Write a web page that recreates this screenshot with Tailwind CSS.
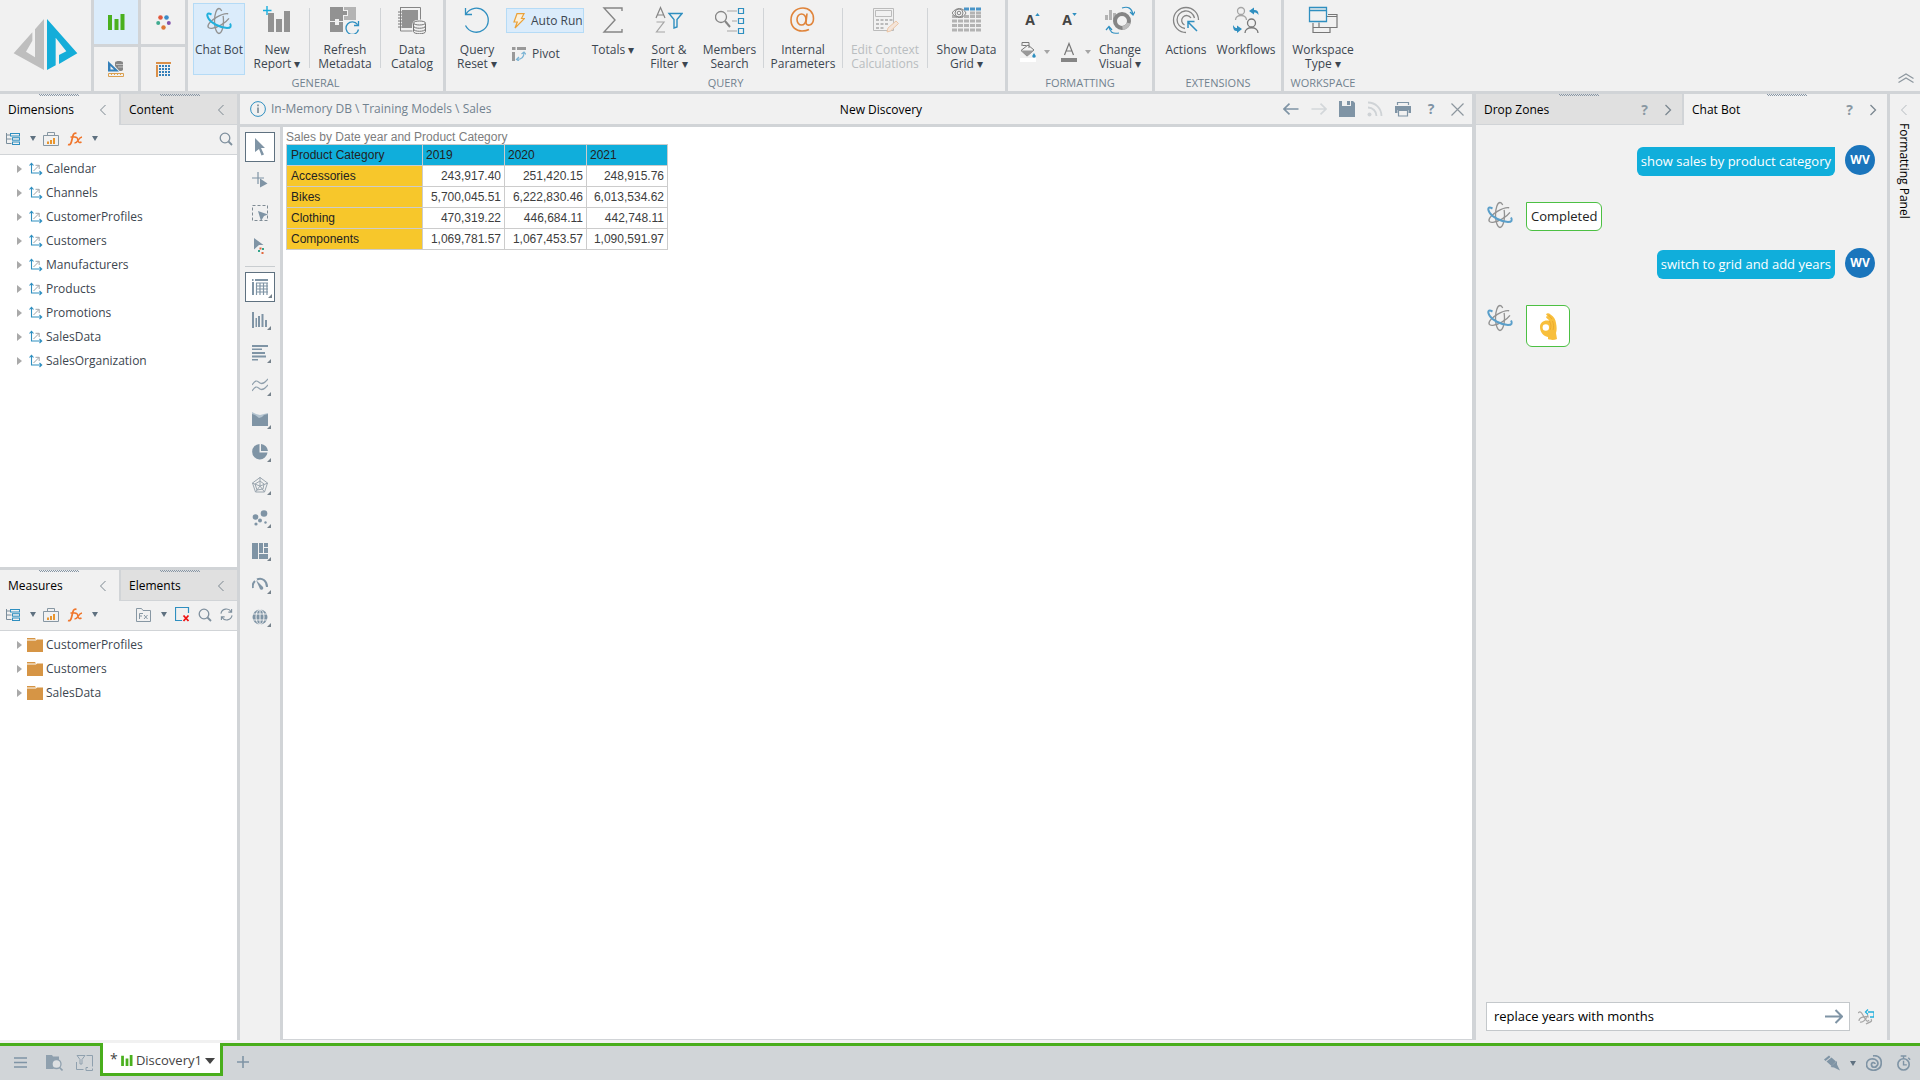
<!DOCTYPE html>
<html lang="en">
<head>
<meta charset="utf-8">
<title>New Discovery</title>
<script src="https://cdn.jsdelivr.net/npm/@tailwindcss/browser@4"></script>
</head>
<body class="flex h-screen flex-col overflow-hidden bg-[#f1f1f1] font-['Open_Sans','Noto_Sans',sans-serif] text-xs text-[#3c4650]">

<!-- Shared icon shapes -->
<svg class="hidden">
  <symbol id="atom" viewBox="0 0 28 28"><g fill="none" stroke-width="1.3"><ellipse cx="14" cy="14" rx="4.5" ry="12.5" stroke="#929292" stroke-dasharray="46 5"/><ellipse cx="14" cy="14" rx="4.5" ry="12.5" stroke="#929292" transform="rotate(60 14 14)" stroke-dasharray="40 6"/><path d="M3.500 11.500C1 7 2.500 5.500 6.500 7.500M3.500 11.500c2.500 4.500 11 9 18.500 9.500 4 0 4.500-2 3-4.500" stroke="currentColor" stroke-width="2"/></g></symbol>
  <symbol id="chev-l" viewBox="0 0 8 12"><path d="M6.500 1L1.500 6l5 5" fill="none" stroke="#7b8790"/></symbol>
  <symbol id="chev-r" viewBox="0 0 8 12"><path d="M1.500 1l5 5-5 5" fill="none" stroke="#7b8790" stroke-width="1.300"/></symbol>
  <symbol id="axes" viewBox="0 0 14 14"><path d="M2.500 1.500v9.500h10M.5 3.500l2-2.200 2 2.200M10.500 9l2.200 2-2.200 2" fill="none" stroke="#2f8fc0" stroke-width="1.100"/><path d="M4.500 9L10 3.500M6.500 3.300h3.700V7" fill="none" stroke="#a0a4a8"/></symbol>
  <symbol id="folder" viewBox="0 0 16 14"><path d="M0 0h8l1 1.500H0zM0 2.500h9l1-1h6V14H0z" fill="#d69545"/></symbol>
  <symbol id="tri" viewBox="0 0 6 8"><path d="M0 0l5 4-5 4z" fill="#a9a9a9"/></symbol>
  <symbol id="down" viewBox="0 0 6 5"><path d="M0 0h6L3 5z" fill="#5f7180"/></symbol>
  <symbol id="tree" viewBox="0 0 14 12"><path d="M.5 0v10.500h5M.5 2h3.500M.5 6h5" fill="none" stroke="#7a8d9b"/><g fill="none" stroke="#2f8fc0"><rect x="4.500" y="0.500" width="9" height="2.500"/><rect x="6.500" y="4.700" width="7" height="2.500"/><rect x="6.500" y="9" width="7" height="2.500"/></g></symbol>
  <symbol id="case" viewBox="0 0 16 14"><path d="M.5 3.500h15v10H.5zM4.500 3V.5h7V3" fill="none" stroke="#8797a3"/><path d="M4 9.500h2V12H4zM7 8h2v4H7zM10 6h2v6h-2z" fill="#e8952e"/></symbol>
  <symbol id="fx" viewBox="0 0 16 14"><path d="M1 12.500c2 .8 3-.8 3.500-3L6 3.500C6.500 1.500 8 .8 9.500 1.500M3.500 5h5" fill="none" stroke="#f0762c" stroke-width="1.700"/><path d="M8 5.500c2-1 2.500 1 3 3s1.500 2.500 3.500 1.500M15 5c-2 .3-3 2-4 3.500S9 11 7.500 11" fill="none" stroke="#f0762c" stroke-width="1.500"/></symbol>
  <symbol id="search" viewBox="0 0 14 14"><circle cx="6" cy="6" r="4.800" fill="none" stroke="#7f909e" stroke-width="1.300"/><path d="M9.500 9.500l3.500 3.500" stroke="#7f909e" stroke-width="1.800"/></symbol>
  <symbol id="grip" viewBox="0 0 40 2"><path d="M0 .5h40M1 1.500h40" stroke="#8796a5" stroke-dasharray="1 1"/></symbol>
  <symbol id="corner" viewBox="0 0 4 4"><path d="M4 0v4H0z" fill="#76828c"/></symbol>
  <symbol id="bars" viewBox="0 0 17 16"><path d="M0 1h4v15H0zM6.500 5h4v11h-4zM12.500 0h4v16h-4z" fill="#4ab01e"/></symbol>
  <symbol id="cursor" viewBox="0 0 12 18"><path d="M1 0l10 10H7l3 6.500-2.500 1L5 11l-4 3z" fill="#7f94a5"/></symbol>
</svg>

<header class="flex h-[94px] shrink-0 border-b-[3px] border-[#d1d4d7] leading-[14px]">
  <a href="#" aria-label="Home" class="w-[91px] shrink-0"><svg class="size-[91px]" viewBox="0 0 273 273"><path d="M132 57v153L41 160 97 97v25l-19 33 27 17V88z" fill="#bebebe"/><path d="M141 57l91 103-55 32v-27l22-11-32-41v83l-26 14z" fill="#14add9"/></svg></a>
  <nav aria-label="Modules" class="grid w-[97px] shrink-0 grid-cols-2 grid-rows-2 gap-[3px] border-x-[3px] border-[#d1d4d7] bg-[#d1d4d7]">
    <button aria-label="Discover" class="grid place-items-center bg-[#dbecfb]"><svg class="h-4 w-[17px]"><use href="#bars"/></svg></button>
    <button aria-label="Present" class="grid place-items-center bg-[#f1f1f1]"><svg class="size-[15px]" viewBox="0 0 15 15"><circle cx="4.500" cy="2.500" r="2.300" fill="#e2573c"/><circle cx="10.500" cy="2.500" r="2.300" fill="#3b8cc8"/><circle cx="2.200" cy="8" r="2" fill="#40ab90"/><circle cx="12.800" cy="8" r="2" fill="#8353ab"/><circle cx="7.500" cy="12.500" r="2.200" fill="#dd7733"/></svg></button>
    <button aria-label="Formulate" class="grid place-items-center bg-[#f1f1f1]"><svg class="size-4" viewBox="0 0 16 16"><path d="M0 0l11 10.500H0zM2.500 5v3.500H6z" fill="#3480ba" fill-rule="evenodd"/><path d="M7 1.500c0-2 8-2 8 0v7c0 1.500-3 2-4 1L7 5z" fill="#858585"/><path d="M8 3.500h7M10 6h5" stroke="#ddd" stroke-width=".7"/><path d="M.5 12.500h15v3H.5zM3.500 12.500V14M6.500 12.500V14M9.500 12.500V14M12.500 12.500V14" fill="none" stroke="#dba050"/></svg></button>
    <button aria-label="Model" class="grid place-items-center bg-[#f1f1f1]"><svg class="size-[15px]" viewBox="0 0 15 15"><path d="M0 1h15M1 3v12" stroke="#da9048" stroke-width="2"/><path d="M4 3v12M7 3v12M10 3v12M13 3v12" stroke="#3480ba" stroke-width="2" stroke-dasharray="2 1"/></svg></button>
  </nav>

  <section aria-label="General" class="flex w-[258px] shrink-0 flex-col border-r-[3px] border-[#d1d4d7]">
    <div class="flex h-[75px] pt-[3px] pl-[5px]">
      <button class="flex h-[72px] w-[52px] flex-col items-center border border-[#b5dbf6] bg-[#dbecfb] pt-[3px]"><svg class="size-7 text-[#22b0dc]"><use href="#atom"/></svg><span class="mt-2">Chat Bot</span></button>
      <button class="flex w-16 flex-col items-center pt-[3px]"><svg class="mb-[9px] size-7" viewBox="0 0 28 28"><path d="M4 0v9M-.5 4.500h9" stroke="#19aede" stroke-width="1.400"/><path d="M5 7h6v19H5zM13 13h6v13h-6zM21 5h6v21h-6z" fill="#929292"/></svg>New<br>Report ▾</button>
      <i class="mt-[5px] h-[60px] w-px bg-[#d1d4d7]"></i>
      <button class="flex w-[70px] flex-col items-center pt-[3px]"><svg class="mb-[9px] h-7 w-[30px]" viewBox="0 0 30 28"><path d="M0 1h13v4h4v4h-4v6H9v-2H5v2H0zM0 16h5v3h4v-3h4v10H0z" fill="#929292"/><path d="M14 1h12v13H14v-4h4V4h-4z" fill="#b4b4b4"/><path d="M27.500 18.500a6.300 6.300 0 1 0 1 5M28.500 15v4.500H24" fill="none" stroke="#2f8fc0" stroke-width="1.300"/></svg>Refresh<br>Metadata</button>
      <i class="mt-[5px] h-[60px] w-px bg-[#d1d4d7]"></i>
      <button class="flex w-[62px] flex-col items-center pt-[3px]"><svg class="mb-[9px] h-7 w-[30px]" viewBox="0 0 30 28"><path d="M3.500 1.500h20v12M3.500 1v24h12" fill="none" stroke="#858585"/><path d="M5 4h16v10c-4 0-6 1-6 8H5z" fill="#929292"/><path d="M1 6h4M1 9h4M1 12h4M1 15h4M1 18h4M1 21h4" stroke="#777"/><g fill="#f1f1f1" stroke="#777"><path d="M16.500 17.500v8c0 3 12 3 12 0v-8"/><path d="M16.500 20c0 3 12 3 12 0M16.500 23c0 3 12 3 12 0" fill="none"/><ellipse cx="22.500" cy="17" rx="6" ry="2"/></g></svg>Data<br>Catalog</button>
    </div>
    <h2 class="pt-px text-center text-[11px] text-[#71828f]">GENERAL</h2>
  </section>

  <section aria-label="Query" class="flex w-[562px] shrink-0 flex-col border-r-[3px] border-[#d1d4d7]">
    <div class="flex h-[75px] pt-[3px] pl-0.5">
      <button class="flex w-[58px] flex-col items-center pt-[3px]"><svg class="mb-[9px] size-7" viewBox="0 0 28 28"><path d="M3 8a12 12 0 1 1-.5 11.500M2.500 2v6.500H9" fill="none" stroke="#2f8fc0" stroke-width="1.300"/></svg>Query<br>Reset ▾</button>
      <div class="flex w-[78px] flex-col gap-2 pt-[5px]">
        <button class="flex h-[25px] items-center gap-1.5 border border-[#b5dbf6] bg-[#dbecfb] pl-1.5 whitespace-nowrap"><svg class="h-4 w-3 shrink-0" viewBox="0 0 12 16"><path d="M4 .7h7L8.500 5.500h3L2 15l2.300-6H1z" fill="#fdf0d8" stroke="#eaa23a" stroke-width="1.200"/></svg>Auto Run</button>
        <button class="flex h-[25px] items-center gap-1.5 pl-1.5"><svg class="size-[14px]" viewBox="0 0 14 14"><path d="M0 0h3.500v3H0zM5 0h9v3H5zM0 5h3v9H0z" fill="#999"/><path d="M5 12.500c5 0 7-2 7-7M9.500 7L12 5l2 2.500M7 10l-2.500 2.500L7 14" fill="none" stroke="#7ab3d4" stroke-width="1.200"/></svg>Pivot</button>
      </div>
      <button class="flex w-[58px] flex-col items-center pt-[3px]"><svg class="mb-[9px] size-7" viewBox="0 0 28 28"><path d="M23 5V2H5l11 12L5 26h18v-3" fill="none" stroke="#858585" stroke-width="1.400"/></svg>Totals ▾</button>
      <button class="flex w-[54px] flex-col items-center pt-[3px]"><svg class="mb-[9px] size-7" viewBox="0 0 28 28"><path d="M1 12L5.500 1.500 10 12M2.500 9h6" fill="none" stroke="#858585" stroke-width="1.200"/><path d="M1.500 16H9L1.500 26H10" fill="none" stroke="#a5a5a5" stroke-width="1.200"/><path d="M14 7.500h13l-5 6v7.500l-3 1v-8.500z" fill="none" stroke="#2f8fc0" stroke-width="1.400"/></svg>Sort &amp;<br>Filter ▾</button>
      <button class="flex w-[67px] flex-col items-center pt-[3px]"><svg class="mb-[9px] h-7 w-[30px]" viewBox="0 0 30 28"><circle cx="6" cy="11" r="5.500" fill="none" stroke="#858585" stroke-width="1.300"/><path d="M10 15l5 6" stroke="#858585" stroke-width="2"/><path d="M12 5h10M17 15h5M12 25h10" stroke="#a5a5a5"/><path d="M23.500 2.500h5v5h-5zM23.500 12.500h5v5h-5zM23.500 22.500h5v5h-5z" fill="none" stroke="#2f8fc0" stroke-width="1.200"/></svg>Members<br>Search</button>
      <i class="mt-[5px] h-[60px] w-px bg-[#d1d4d7]"></i>
      <button class="flex w-[78px] flex-col items-center pt-[3px]"><svg class="mb-[9px] size-7" viewBox="0 0 28 28"><g fill="none" stroke="#e0843a" stroke-width="1.600"><ellipse cx="12.500" cy="13.500" rx="4.500" ry="5.500"/><path d="M18 7.500l-1 9c-.3 4 7.500 4 7.500-4C24.500 6 20 2 14 2 7 2 2 7 2 14s5 11 11 11c3 0 5-.5 7-1.500"/></g></svg>Internal<br>Parameters</button>
      <i class="mt-[5px] h-[60px] w-px bg-[#d1d4d7]"></i>
      <button disabled class="flex w-[84px] flex-col items-center pt-[3px] text-[#b9bdc0]"><svg class="mb-[9px] h-7 w-[30px]" viewBox="0 0 30 28"><path d="M3.500 2.500h20v22h-20zM5.500 4.500h16v6h-16z" fill="none" stroke="#bbb"/><path d="M6 14h3m1.500 0h3m1.500 0h3m1.500 0h3M6 18h3m1.500 0h3m1.500 0h3M6 22h3m1.500 0h3" stroke="#bbb" stroke-width="2"/><path d="M17 26l1-4 8-7 2.500 2.500-8 7.500z" fill="#f4e5da" stroke="#ecc6a6"/></svg>Edit Context<br>Calculations</button>
      <i class="mt-[5px] h-[60px] w-px bg-[#d1d4d7]"></i>
      <button class="flex w-[77px] flex-col items-center pt-[3px]"><svg class="mb-[9px] h-7 w-[30px]" viewBox="0 0 30 28"><path d="M0 10.500h30M0 15h30M0 19.500h30M0 24h30" stroke="#b3b3b3" stroke-width="3" stroke-dasharray="5 1"/><path d="M12 3h18" stroke="#4a95c8" stroke-width="3" stroke-dasharray="5 1"/><path d="M18 7h12" stroke="#b3b3b3" stroke-width="3" stroke-dasharray="5 1"/><path d="M0 7c4-6 11-6 14 0-3 6-10 6-14 0z" fill="#f1f1f1" stroke="#858585"/><circle cx="7" cy="7" r="4" fill="none" stroke="#858585"/><circle cx="7" cy="7" r="1.800" fill="none" stroke="#858585"/></svg>Show Data<br>Grid ▾</button>
    </div>
    <h2 class="pt-px text-center text-[11px] text-[#71828f]">QUERY</h2>
  </section>

  <section aria-label="Formatting" class="flex w-[147px] shrink-0 flex-col border-r-[3px] border-[#d1d4d7]">
    <div class="flex h-[75px] pt-[3px]">
      <div class="grid w-20 grid-cols-2 grid-rows-[32px_32px] pt-px pl-1.5">
        <button aria-label="Increase font" class="flex items-center justify-center text-sm font-bold text-[#444]">A<svg class="mb-3 h-[3px] w-[5px]" viewBox="0 0 6 4"><path d="M0 4h6L3 0z" fill="#2f8fc0"/></svg></button>
        <button aria-label="Decrease font" class="flex items-center justify-center text-sm font-bold text-[#444]">A<svg class="mb-3 h-[3px] w-[5px]" viewBox="0 0 6 4"><path d="M0 0h6L3 4z" fill="#2f8fc0"/></svg></button>
        <button aria-label="Fill colour" class="flex items-center gap-2 pl-1.5"><svg class="h-5 w-4 shrink-0" viewBox="0 0 16 20"><path d="M2 4V.5h7V6M2.500 3.500h4M1 8.500L8 3l6 5-7 6z" fill="none" stroke="#777"/><path d="M1.500 8.500h12.500l-7 6z" fill="#999"/><path d="M14 11l1.800 3a1.800 1.800 0 1 1-3.600 0z" fill="#2f8fc0"/><path d="M0 16h16v4H0z" fill="#fff"/></svg><svg class="h-1 w-1.5 shrink-0" viewBox="0 0 6 4"><path d="M0 0h6L3 4z" fill="#a5a5a5"/></svg></button>
        <button aria-label="Text colour" class="flex items-center gap-2 pl-[10px]"><svg class="h-5 w-4 shrink-0" viewBox="0 0 16 20"><path d="M3.500 13L8 1.500 12.500 13M5 9h6" fill="none" stroke="#777" stroke-width="1.200"/><path d="M0 16h16v4H0z" fill="#858585"/></svg><svg class="h-1 w-1.5 shrink-0" viewBox="0 0 6 4"><path d="M0 0h6L3 4z" fill="#a5a5a5"/></svg></button>
      </div>
      <button class="flex w-16 flex-col items-center pt-[3px]"><svg class="mb-[9px] h-7 w-[30px]" viewBox="0 0 30 28"><path d="M0 9h3v5H0zM4 4h3v10H4zM8 7h3v5l-3 2z" fill="#b3b3b3"/><circle cx="17" cy="15" r="7" fill="none" stroke="#858585" stroke-width="4"/><path d="M23.500 17a7 7 0 0 1-6 5" fill="none" stroke="#bbb" stroke-width="4"/><path d="M17 2c6-2 10 0 11 7M25 6l3 3 2-3.500M14 27C7 28 5 26 4 21M1 24l3-3.500L7 24" fill="none" stroke="#2f8fc0" stroke-width="1.200"/></svg>Change<br>Visual ▾</button>
    </div>
    <h2 class="pt-px text-center text-[11px] text-[#71828f]">FORMATTING</h2>
  </section>

  <section aria-label="Extensions" class="flex w-[129px] shrink-0 flex-col border-r-[3px] border-[#d1d4d7]">
    <div class="flex h-[75px] pt-[3px]">
      <button class="flex w-[62px] flex-col items-center pt-[3px]"><svg class="mb-[9px] size-7" viewBox="0 0 28 28"><g fill="none" stroke="#858585" stroke-width="1.300"><path d="M14 26.500A12.500 12.500 0 1 1 26.500 14"/><path d="M13 22.500A8.800 8.800 0 1 1 22.500 12"/><path d="M12.500 19A5 5 0 1 1 19 12"/></g><path d="M25 25L16 16M16 22v-6.500h6.500" fill="none" stroke="#2f8fc0" stroke-width="1.500"/></svg>Actions</button>
      <button class="flex w-[58px] flex-col items-center pt-[3px]"><svg class="mb-[9px] size-7" viewBox="0 0 28 28"><g fill="none" stroke="#a5a5a5" stroke-width="1.300"><circle cx="9" cy="5" r="3.500"/><path d="M3.500 14c0-6 11-6 11 0"/></g><g fill="none" stroke="#777" stroke-width="1.300"><circle cx="19.500" cy="17" r="4"/><path d="M13 27c0-7 13-7 13 0"/></g><path d="M17 5l5-3.500V4c3 0 4.500 1 4.500 5C25 7 24 6.500 22 6.500v2zM10 23l-5-3.500V22c-1.500 0-2.500-.5-4-3 0 5 1.500 6 4 6v2z" fill="#2f8fc0"/></svg>Workflows</button>
    </div>
    <h2 class="pt-px text-center text-[11px] text-[#71828f]">EXTENSIONS</h2>
  </section>

  <section aria-label="Workspace" class="flex w-[78px] shrink-0 flex-col">
    <div class="flex h-[75px] justify-center pt-[3px]">
      <button class="flex flex-col items-center pt-[3px]"><svg class="mb-[9px] h-7 w-[30px]" viewBox="0 0 30 28"><path d="M20 8.500h9v13H11v-5M14 21.500H5v5h17v-5M19 10.500h10M5 17v5" fill="none" stroke="#777" stroke-width="1.200"/><path d="M1.500 1.500h17v14h-17zM1.500 4.500h17" fill="#f1f1f1" stroke="#2f8fc0" stroke-width="1.300"/></svg>Workspace<br>Type ▾</button>
    </div>
    <h2 class="pt-px text-center text-[11px] text-[#71828f]">WORKSPACE</h2>
  </section>
  <div class="flex flex-1 items-end justify-end px-1.5 pb-2"><button aria-label="Collapse ribbon"><svg class="h-[10px] w-4" viewBox="0 0 16 10"><path d="M.5 5.500L8 1l7.500 4.500M.5 9.500L8 5l7.500 4.500" fill="none" stroke="#8d979f" stroke-width="1.200"/></svg></button></div>
</header>

<main class="flex min-h-0 flex-1">
  <aside class="flex w-60 shrink-0 flex-col border-r-[3px] border-[#d1d4d7] bg-white">
    <section aria-label="Dimensions" class="flex h-[calc(50%+3px)] shrink-0 flex-col border-b-[3px] border-[#d1d4d7]">
      <div role="tablist" class="flex h-[31px] shrink-0 font-medium text-black">
        <button role="tab" aria-selected="true" class="relative flex w-[119px] items-center justify-between bg-[#f1f1f1] pr-3 pl-2"><svg class="absolute top-0 left-[39px] h-0.5 w-10"><use href="#grip"/></svg>Dimensions<svg class="h-3 w-2"><use href="#chev-l"/></svg></button>
        <button role="tab" class="relative flex flex-1 items-center justify-between border-b border-l-2 border-[#d1d4d7] bg-[#e0e0e0] pt-px pr-3 pl-2"><svg class="absolute top-0 left-[39px] h-0.5 w-10"><use href="#grip"/></svg>Content<svg class="h-3 w-2"><use href="#chev-l"/></svg></button>
      </div>
      <div class="flex h-[30px] shrink-0 items-center border-b border-[#d1d4d7] bg-[#f1f1f1] pr-1 pb-0.5 pl-1.5">
        <button aria-label="Tree view"><svg class="h-3 w-[14px]"><use href="#tree"/></svg></button><svg class="ml-[10px] h-[5px] w-1.5"><use href="#down"/></svg>
        <button aria-label="Report" class="ml-[7px]"><svg class="h-[14px] w-4"><use href="#case"/></svg></button>
        <button aria-label="Formula" class="ml-2"><svg class="h-[14px] w-4"><use href="#fx"/></svg></button><svg class="ml-[9px] h-[5px] w-1.5"><use href="#down"/></svg>
        <button aria-label="Search" class="ml-auto"><svg class="size-[14px]"><use href="#search"/></svg></button>
      </div>
      <ul class="pt-0.5 leading-6">
        <li class="flex h-6 items-center pl-[17px]"><svg class="h-2 w-1.5"><use href="#tri"/></svg><svg class="mr-[3px] ml-1.5 size-[14px]"><use href="#axes"/></svg>Calendar</li>
        <li class="flex h-6 items-center pl-[17px]"><svg class="h-2 w-1.5"><use href="#tri"/></svg><svg class="mr-[3px] ml-1.5 size-[14px]"><use href="#axes"/></svg>Channels</li>
        <li class="flex h-6 items-center pl-[17px]"><svg class="h-2 w-1.5"><use href="#tri"/></svg><svg class="mr-[3px] ml-1.5 size-[14px]"><use href="#axes"/></svg>CustomerProfiles</li>
        <li class="flex h-6 items-center pl-[17px]"><svg class="h-2 w-1.5"><use href="#tri"/></svg><svg class="mr-[3px] ml-1.5 size-[14px]"><use href="#axes"/></svg>Customers</li>
        <li class="flex h-6 items-center pl-[17px]"><svg class="h-2 w-1.5"><use href="#tri"/></svg><svg class="mr-[3px] ml-1.5 size-[14px]"><use href="#axes"/></svg>Manufacturers</li>
        <li class="flex h-6 items-center pl-[17px]"><svg class="h-2 w-1.5"><use href="#tri"/></svg><svg class="mr-[3px] ml-1.5 size-[14px]"><use href="#axes"/></svg>Products</li>
        <li class="flex h-6 items-center pl-[17px]"><svg class="h-2 w-1.5"><use href="#tri"/></svg><svg class="mr-[3px] ml-1.5 size-[14px]"><use href="#axes"/></svg>Promotions</li>
        <li class="flex h-6 items-center pl-[17px]"><svg class="h-2 w-1.5"><use href="#tri"/></svg><svg class="mr-[3px] ml-1.5 size-[14px]"><use href="#axes"/></svg>SalesData</li>
        <li class="flex h-6 items-center pl-[17px]"><svg class="h-2 w-1.5"><use href="#tri"/></svg><svg class="mr-[3px] ml-1.5 size-[14px]"><use href="#axes"/></svg>SalesOrganization</li>
      </ul>
    </section>
    <section aria-label="Measures" class="flex-1">
      <div role="tablist" class="flex h-[31px] font-medium text-black">
        <button role="tab" aria-selected="true" class="relative flex w-[119px] items-center justify-between bg-[#f1f1f1] pr-3 pl-2"><svg class="absolute top-0 left-[39px] h-0.5 w-10"><use href="#grip"/></svg>Measures<svg class="h-3 w-2"><use href="#chev-l"/></svg></button>
        <button role="tab" class="relative flex flex-1 items-center justify-between border-b border-l-2 border-[#d1d4d7] bg-[#e0e0e0] pt-px pr-3 pl-2"><svg class="absolute top-0 left-[39px] h-0.5 w-10"><use href="#grip"/></svg>Elements<svg class="h-3 w-2"><use href="#chev-l"/></svg></button>
      </div>
      <div class="flex h-[30px] items-center border-b border-[#d1d4d7] bg-[#f1f1f1] pr-1 pb-0.5 pl-1.5">
        <button aria-label="Tree view"><svg class="h-3 w-[14px]"><use href="#tree"/></svg></button><svg class="ml-[10px] h-[5px] w-1.5"><use href="#down"/></svg>
        <button aria-label="Report" class="ml-[7px]"><svg class="h-[14px] w-4"><use href="#case"/></svg></button>
        <button aria-label="Formula" class="ml-2"><svg class="h-[14px] w-4"><use href="#fx"/></svg></button><svg class="ml-[9px] h-[5px] w-1.5"><use href="#down"/></svg>
        <button aria-label="Formula folder" class="ml-auto"><svg class="h-[14px] w-[15px]" viewBox="0 0 15 14"><path d="M.5 13.500V.5h5l1.500 2h7.500v11z" fill="none" stroke="#8797a3"/><path d="M3.500 11V5.500h3.500M3.500 8H6M8 7l3.500 4M11.500 7L8 11" fill="none" stroke="#8797a3"/></svg></button><svg class="ml-[10px] h-[5px] w-1.5"><use href="#down"/></svg>
        <button aria-label="Clear" class="ml-2"><svg class="h-[15px] w-[15px]" viewBox="0 0 15 15"><path d="M7 13.500H.5V.5h13V6" fill="none" stroke="#2f8fc0" stroke-width="1.200"/><path d="M8.500 8.500l5 5.500M13.500 8.500l-5 5.500" stroke="#e11" stroke-width="1.800"/></svg></button>
        <button aria-label="Search" class="ml-2"><svg class="size-[14px]"><use href="#search"/></svg></button>
        <button aria-label="Refresh" class="ml-2"><svg class="size-[13px]" viewBox="0 0 14 14"><path d="M1 6a6 6 0 0 1 11-2M13 8a6 6 0 0 1-11 2M12.500 1v3.500H9M1.500 13V9.500H5" fill="none" stroke="#7f909e" stroke-width="1.200"/></svg></button>
      </div>
      <ul class="pt-0.5 leading-6">
        <li class="flex h-6 items-center pl-[17px]"><svg class="h-2 w-1.5"><use href="#tri"/></svg><svg class="mr-[3px] ml-1 h-[14px] w-4"><use href="#folder"/></svg>CustomerProfiles</li>
        <li class="flex h-6 items-center pl-[17px]"><svg class="h-2 w-1.5"><use href="#tri"/></svg><svg class="mr-[3px] ml-1 h-[14px] w-4"><use href="#folder"/></svg>Customers</li>
        <li class="flex h-6 items-center pl-[17px]"><svg class="h-2 w-1.5"><use href="#tri"/></svg><svg class="mr-[3px] ml-1 h-[14px] w-4"><use href="#folder"/></svg>SalesData</li>
      </ul>
    </section>
  </aside>

  <section aria-label="Discovery" class="flex min-w-0 flex-1 flex-col">
    <div class="grid h-[33px] shrink-0 grid-cols-3 items-center border-b-[3px] border-[#d1d4d7] pr-2 pl-[10px]">
      <div class="flex items-center gap-[5px] text-[#71828f]"><svg class="size-4" viewBox="0 0 16 16"><circle cx="8" cy="8" r="7.400" fill="none" stroke="#2f8fc0"/><path d="M8 6.500V12M8 3.500v1.700" stroke="#71828f" stroke-width="1.500"/></svg>In-Memory DB \ Training Models \ Sales</div>
      <h1 class="pt-px pl-12 text-center font-medium text-black">New Discovery</h1>
      <div class="flex items-center justify-end gap-3">
        <button aria-label="Back"><svg class="h-3 w-4" viewBox="0 0 16 12"><path d="M15.500 6H1M6.500.7L1 6l5.500 5.300" fill="none" stroke="#7f94a5" stroke-width="1.700"/></svg></button>
        <button aria-label="Forward"><svg class="h-3 w-4" viewBox="0 0 16 12"><path d="M.5 6H15M9.500.7L15 6l-5.500 5.300" fill="none" stroke="#d3d7da" stroke-width="1.700"/></svg></button>
        <button aria-label="Save"><svg class="size-4" viewBox="0 0 16 16"><path d="M0 0h3v5h9V0h2l2 2v14H0zM8 0h3v4H8z" fill="#7f94a5"/></svg></button>
        <button aria-label="Feed"><svg class="size-4" viewBox="0 0 16 16"><circle cx="2.500" cy="13.500" r="2" fill="#cfd3d6"/><path d="M1 6.500A8.500 8.500 0 0 1 9.500 15M1 1.500A13.500 13.500 0 0 1 14.500 15" fill="none" stroke="#cfd3d6" stroke-width="1.800"/></svg></button>
        <button aria-label="Print"><svg class="size-4" viewBox="0 0 16 16"><path d="M0 5h16v7h-2.500V9h-11v3H0z" fill="#7f94a5"/><path d="M2.500 4V1.500h11V4M3.500 9.500h9v5.500h-9z" fill="none" stroke="#7f94a5" stroke-width="1.200"/></svg></button>
        <button aria-label="Help" class="w-4 text-sm font-bold text-[#7f94a5]">?</button>
        <button aria-label="Close"><svg class="size-[13px]" viewBox="0 0 13 13"><path d="M.5.5l12 12M12.500.5l-12 12" stroke="#8d979f" stroke-width="1.200"/></svg></button>
      </div>
    </div>
    <div class="flex min-h-0 flex-1">
      <div role="toolbar" aria-label="Visual tools" class="w-[43px] shrink-0 border-r-[3px] border-[#d1d4d7] px-[5px] pt-[5px]">
        <div class="flex flex-col gap-[3px]">
          <button aria-label="Select" class="grid h-[30px] place-items-center border border-[#5f7180] bg-white"><svg class="h-[18px] w-3"><use href="#cursor"/></svg></button>
          <button aria-label="Add point" class="grid h-[30px] place-items-center"><svg class="size-4" viewBox="0 0 16 16"><path d="M6 0v12M0 6h12" stroke="#7f94a5" stroke-width="1.200"/><path d="M8 6.500l7.500 5L8 15.500z" fill="#7f94a5"/></svg></button>
          <button aria-label="Lasso" class="grid h-[30px] place-items-center"><svg class="size-[17px]" viewBox="0 0 17 17"><path d="M.5.5h15v15H.5z" fill="none" stroke="#7f8b94" stroke-dasharray="3 2"/><path d="M6 6l10 3.500-4 1.500-3 5z" fill="#7f94a5"/></svg></button>
          <button aria-label="Point select" class="grid h-[30px] place-items-center"><svg class="size-4" viewBox="0 0 16 16"><path d="M2 0l9.500 7H7l-5 4.500z" fill="#7f94a5"/><path d="M6 12h2v2H6zM10 10h2v2h-2z" fill="#35a58c"/><path d="M7.500 9.500h2v2h-2zM9.500 14h2v2h-2z" fill="#e2673c"/></svg></button>
        </div>
        <hr class="my-[5px] border-[#c9cdd0]">
        <div class="flex flex-col gap-[3px]">
          <button aria-label="Grid" class="relative grid h-[30px] place-items-center border border-[#5f7180] bg-white"><svg class="absolute right-0.5 bottom-[3px] size-1"><use href="#corner"/></svg><svg class="size-4" viewBox="0 0 16 16"><path d="M0 1h1.500M3 1h13M1 3v13" stroke="#7f94a5" stroke-width="2"/><path d="M4 4h12M4 7h12M4 10h12M4 13h12M4.500 4v12M8 4v12M11.500 4v12M15 4v12" stroke="#7f94a5" stroke-width="1.200"/></svg></button>
          <button aria-label="Column chart" class="relative grid h-[30px] place-items-center"><svg class="absolute right-1 bottom-[5px] size-1"><use href="#corner"/></svg><svg class="size-4" viewBox="0 0 16 16"><path d="M0 0h2v16H0zM3.500 6H5v9H3.500zM6 4h2v11H6zM9.500 2h2v13h-2zM13 8h2v7h-2z" fill="#7f94a5"/></svg></button>
          <button aria-label="Bar chart" class="relative grid h-[30px] place-items-center"><svg class="absolute right-1 bottom-[5px] size-1"><use href="#corner"/></svg><svg class="size-4" viewBox="0 0 16 16"><path d="M0 0h16v2H0zM0 3.500h10V5H0zM0 7h13v2H0zM0 10.500h14v2H0zM0 14h6v1.500H0z" fill="#7f94a5"/></svg></button>
          <button aria-label="Line chart" class="relative grid h-[30px] place-items-center"><svg class="absolute right-1 bottom-[5px] size-1"><use href="#corner"/></svg><svg class="size-4" viewBox="0 0 16 16"><path d="M0 7c4-6 5-4 8-2s5-1 8-4M0 13c4-6 5-4 8-2s5-1 8-4" fill="none" stroke="#8f9fac" stroke-width="1.200"/></svg></button>
          <button aria-label="Area chart" class="relative grid h-[30px] place-items-center"><svg class="absolute right-1 bottom-[5px] size-1"><use href="#corner"/></svg><svg class="size-4" viewBox="0 0 16 16"><path d="M0 1l4 2 4 1 4-1 4-1v13H0z" fill="#b3c3cf"/><path d="M0 3l3 1 4 3 3-1 2-2 4-1v12H0z" fill="#7f94a5"/></svg></button>
          <button aria-label="Pie chart" class="relative grid h-[30px] place-items-center"><svg class="absolute right-1 bottom-[5px] size-1"><use href="#corner"/></svg><svg class="size-4" viewBox="0 0 16 16"><path d="M7.500 0v8.500h8A7.700 7.700 0 1 1 7.500 0zM9 0a7.500 7.500 0 0 1 7 7H9z" fill="#7f94a5"/></svg></button>
          <button aria-label="Radar chart" class="relative grid h-[30px] place-items-center"><svg class="absolute right-1 bottom-[5px] size-1"><use href="#corner"/></svg><svg class="size-4" viewBox="0 0 16 16"><path d="M8 .5l7.500 5.500-3 9h-9l-3-9zM8 4l4 3-1 5-6 1-2-6zM8 0v9M0 6l8 3 8-3M3.500 15L8 9l4.500 6" fill="none" stroke="#9aa5ae"/></svg></button>
          <button aria-label="Scatter chart" class="relative grid h-[30px] place-items-center"><svg class="absolute right-1 bottom-[5px] size-1"><use href="#corner"/></svg><svg class="size-4" viewBox="0 0 16 16"><g fill="#7f94a5"><circle cx="3.500" cy="7" r="2.800"/><circle cx="12" cy="3.500" r="3.300"/><circle cx="8" cy="10.500" r="2"/><circle cx="4" cy="14" r="1.600"/><circle cx="13.500" cy="12.500" r="1.200"/></g></svg></button>
          <button aria-label="Treemap" class="relative grid h-[30px] place-items-center"><svg class="absolute right-1 bottom-[5px] size-1"><use href="#corner"/></svg><svg class="size-4" viewBox="0 0 16 16"><path d="M0 0h6v16H0zM7 0h4v10H7zM12 0h4v4h-4zM12 5h4v5h-4zM7 11h9v5H7z" fill="#7f94a5"/></svg></button>
          <button aria-label="Gauge" class="relative grid h-[30px] place-items-center"><svg class="absolute right-1 bottom-[5px] size-1"><use href="#corner"/></svg><svg class="size-4" viewBox="0 0 16 16"><path d="M1 12A7 7 0 0 1 3 5M5 3.500C10 1 15 5 15 11" fill="none" stroke="#7f94a5" stroke-width="2"/><path d="M4 4l7 7c1 2-1 4-3 2z" fill="#7f94a5"/></svg></button>
          <button aria-label="Map" class="relative grid h-[30px] place-items-center"><svg class="absolute right-1 bottom-[5px] size-1"><use href="#corner"/></svg><svg class="size-4" viewBox="0 0 16 16"><circle cx="8" cy="8" r="7.500" fill="#7f94a5"/><path d="M0 5h16M0 11h16M8 0v16" stroke="#f1f1f1"/><ellipse cx="8" cy="8" rx="4" ry="7.500" fill="none" stroke="#f1f1f1"/></svg></button>
        </div>
      </div>
      <div class="min-w-0 flex-1 border-b border-[#d1d4d7] bg-white pt-[3px] pl-[3px] font-['Liberation_Sans',Arial,sans-serif]">
        <table class="border-collapse leading-4">
          <caption class="h-[14px] text-left leading-[14px] whitespace-nowrap text-[#7d7d7d]">Sales by Date year and Product Category</caption>
          <thead><tr class="h-[21px] bg-[#10aedb] text-left text-[#222]"><th class="w-[136px] border border-[#ccc] px-1 font-normal">Product Category</th><th class="w-[82px] border border-[#ccc] px-[3px] font-normal">2019</th><th class="w-[82px] border border-[#ccc] px-[3px] font-normal">2020</th><th class="w-[81px] border border-[#ccc] px-[3px] font-normal">2021</th></tr></thead>
          <tbody class="text-right text-[#3d3d3d]">
            <tr class="h-[21px]"><th class="border border-[#ccc] bg-[#f7c72b] px-1 text-left font-normal text-[#222]">Accessories</th><td class="border border-[#ccc] px-[3px]">243,917.40</td><td class="border border-[#ccc] px-[3px]">251,420.15</td><td class="border border-[#ccc] px-[3px]">248,915.76</td></tr>
            <tr class="h-[21px]"><th class="border border-[#ccc] bg-[#f7c72b] px-1 text-left font-normal text-[#222]">Bikes</th><td class="border border-[#ccc] px-[3px]">5,700,045.51</td><td class="border border-[#ccc] px-[3px]">6,222,830.46</td><td class="border border-[#ccc] px-[3px]">6,013,534.62</td></tr>
            <tr class="h-[21px]"><th class="border border-[#ccc] bg-[#f7c72b] px-1 text-left font-normal text-[#222]">Clothing</th><td class="border border-[#ccc] px-[3px]">470,319.22</td><td class="border border-[#ccc] px-[3px]">446,684.11</td><td class="border border-[#ccc] px-[3px]">442,748.11</td></tr>
            <tr class="h-[21px]"><th class="border border-[#ccc] bg-[#f7c72b] px-1 text-left font-normal text-[#222]">Components</th><td class="border border-[#ccc] px-[3px]">1,069,781.57</td><td class="border border-[#ccc] px-[3px]">1,067,453.57</td><td class="border border-[#ccc] px-[3px]">1,090,591.97</td></tr>
          </tbody>
        </table>
      </div>
    </div>
  </section>

  <aside class="flex w-[418px] shrink-0 flex-col border-r-[3px] border-l-4 border-[#d1d4d7]">
    <div role="tablist" class="flex h-[31px] shrink-0 font-medium text-black">
      <button role="tab" class="relative flex w-52 items-center border-r-2 border-b border-[#d1d4d7] bg-[#e0e0e0] pt-px pr-[10px] pl-2"><svg class="absolute top-0 left-[83px] h-0.5 w-10"><use href="#grip"/></svg>Drop Zones<span class="ml-auto pr-4 text-sm font-bold text-[#8a98a3]">?</span><svg class="h-3 w-2"><use href="#chev-r"/></svg></button>
      <button role="tab" aria-selected="true" class="relative flex flex-1 items-center pr-[10px] pl-2"><svg class="absolute top-0 left-[83px] h-0.5 w-10"><use href="#grip"/></svg>Chat Bot<span class="ml-auto pr-4 text-sm font-bold text-[#8a98a3]">?</span><svg class="h-3 w-2"><use href="#chev-r"/></svg></button>
    </div>
    <div class="flex min-h-0 flex-1 flex-col pt-5 pr-3 pl-[10px] text-[13px] leading-[29px]">
      <div class="mb-[26px] flex items-start justify-end gap-[10px]"><p class="mt-0.5 rounded-b-[6px] rounded-tl-[6px] bg-[#10aedb] px-1 text-white">show sales by product category</p><span class="grid size-[30px] place-items-center rounded-full bg-[#1a75bc] text-xs font-bold text-white">WV</span></div>
      <div class="mb-[17px] flex items-start gap-3"><svg class="-mt-px size-7 text-[#5a9fca]"><use href="#atom"/></svg><p class="h-[29px] rounded-b-[6px] rounded-tr-[6px] border border-[#4cc043] bg-white px-1 leading-[27px] text-[#222]">Completed</p></div>
      <div class="mb-[26px] flex items-start justify-end gap-[10px]"><p class="mt-0.5 rounded-b-[6px] rounded-tl-[6px] bg-[#10aedb] px-1 text-white">switch to grid and add years</p><span class="grid size-[30px] place-items-center rounded-full bg-[#1a75bc] text-xs font-bold text-white">WV</span></div>
      <div class="flex items-start gap-3"><svg class="-mt-px size-7 text-[#5a9fca]"><use href="#atom"/></svg><p role="img" aria-label="OK hand" class="grid h-[42px] w-11 place-items-center rounded-b-[6px] rounded-tr-[6px] border border-[#4cc043] bg-white"><svg class="h-[27px] w-[19px]" viewBox="0 0 19 27"><path d="M7 1.500C8-.2 10 0 11.500 1.500c3.500 2 5 5 5.500 8.500.7 3.500 1 7 0 10l1 6c-3 1.500-7 1-9 0v-2c-5-1-8-5-8-10C1 10 4 7.500 8 7.500h2.500L7.500 5c-1-1 0-2.300 1.200-1.700z" fill="#f8bf3c"/><circle cx="6.800" cy="14.500" r="3.200" fill="#fff"/><path d="M10.500 8c1.500 3 2 6 .5 9M13.500 8c1.200 3 1.500 6 .5 9M9.500 2l3.500 4" fill="none" stroke="#e9a52c" stroke-width=".8"/></svg></p></div>
      <form class="mt-auto mb-[9px] flex items-center">
        <div class="relative w-[364px]"><input type="text" aria-label="Message" value="replace years with months" class="h-[29px] w-full border border-[#c4c8cb] bg-white px-[7px] text-[13px] text-black"><button type="button" aria-label="Send" class="absolute top-[7px] right-[7px]"><svg class="h-[15px] w-[18px]" viewBox="0 0 18 15"><path d="M0 7.500h16.500M10.500 1l6.500 6.500-6.500 6.500" fill="none" stroke="#7f94a5" stroke-width="2"/></svg></button></div>
        <button type="button" aria-label="Reset chat" class="ml-2"><svg class="size-4" viewBox="0 0 16 16"><path d="M0 4c3-3 4 1 6 4s3 6 5 3M1 12c0-4 6-5 10-4M2 13c3 1 6-3 8-7M13 10c2 3-2 3-5 5" fill="none" stroke="#a5a5a5" stroke-width="1.200"/><path d="M10 3h6v5h-4M10 .5L7.500 3 10 5.500" fill="none" stroke="#22b0dc" stroke-width="1.300"/></svg></button>
      </form>
    </div>
  </aside>
  <aside class="flex w-[30px] shrink-0 flex-col items-center pt-[10px] pr-0.5">
    <button class="flex flex-col items-center gap-[7px] text-black"><svg class="h-3 w-2 opacity-50"><use href="#chev-l"/></svg><span class="[writing-mode:vertical-rl]">Formatting Panel</span></button>
  </aside>
</main>

<footer class="mt-[3px] flex h-[37px] shrink-0 border-t-[3px] border-[#49ae1c] bg-[#d1d5d8]">
  <div class="flex h-[33px] w-[100px] items-center gap-[19px] pl-[14px]">
    <button aria-label="Menu"><svg class="h-[11px] w-[13px]" viewBox="0 0 13 11"><path d="M0 1h13M0 5.500h13M0 10h13" stroke="#7f94a5" stroke-width="1.700"/></svg></button>
    <button aria-label="Find content"><svg class="h-4 w-[17px]" viewBox="0 0 17 16"><path d="M0 0h6l1 1.500h6V6a5 5 0 0 0-5 8H0z" fill="#8fa0ae"/><circle cx="10.500" cy="9" r="4.500" fill="#dde0e2" stroke="#8fa0ae" stroke-width="1.300"/><path d="M13.500 12.500l3 3" stroke="#8fa0ae" stroke-width="1.600"/></svg></button>
    <button aria-label="Filters" class="-ml-1.5"><svg class="h-4 w-[17px]" viewBox="0 0 17 16"><path d="M1 .5h8L6 4.500V9H4V4.500zM10.500.5h6v11M.5 7v7.500h7M12 12.500h-2v3h6.500v-2" fill="none" stroke="#8fa0ae"/></svg></button>
  </div>
  <button class="-mt-[3px] flex h-[33px] w-[123px] items-center justify-between border-x-[3px] border-b-[3px] border-[#49ae1c] bg-white pt-[5px] pr-[5px] pl-[7px] text-[13px] text-[#444]"><span class="mb-1 text-sm leading-none">*</span><svg class="h-[11px] w-3"><use href="#bars"/></svg><span>Discovery1</span><svg class="h-1.5 w-[10px]" viewBox="0 0 10 6"><path d="M0 0h10L5 6z" fill="#444"/></svg></button>
  <button aria-label="New tab" class="mb-[2px] ml-[14px]"><svg class="size-3" viewBox="0 0 12 12"><path d="M6 0v12M0 6h12" stroke="#7f94a5" stroke-width="1.600"/></svg></button>
  <div class="ml-auto flex items-center gap-[10px] pr-2">
    <button aria-label="Pin" class="flex items-center gap-[10px]"><svg class="size-4" viewBox="0 0 16 16"><path d="M0 4.500L5 .5l1.500 1.500-5 4zM2.500 6.500l5-4 4.500 4-4.500 4.500zM6.500 12l6.500-6v3.500l3 6-6-3z" fill="#7f94a5"/></svg><svg class="h-[5px] w-1.5"><use href="#down"/></svg></button>
    <button aria-label="Status"><svg class="size-4" viewBox="0 0 16 16"><path d="M7 .800C14 0 16 5 15 10s-8 6.500-12 4-3-9 2-10 8 3 6.500 6-5.500 3-6 0S9 7 9 9" fill="none" stroke="#7f94a5" stroke-width="1.700"/></svg></button>
    <button aria-label="Timer" class="ml-1"><svg class="size-4" viewBox="0 0 16 17"><circle cx="7.500" cy="10" r="6" fill="none" stroke="#7f94a5" stroke-width="1.700"/><path d="M7.500 6v4.500H11M4.500 1h6M7.500 1v3M12.500 3l2 2" fill="none" stroke="#7f94a5" stroke-width="1.500"/></svg></button>
  </div>
</footer>
</body>
</html>
